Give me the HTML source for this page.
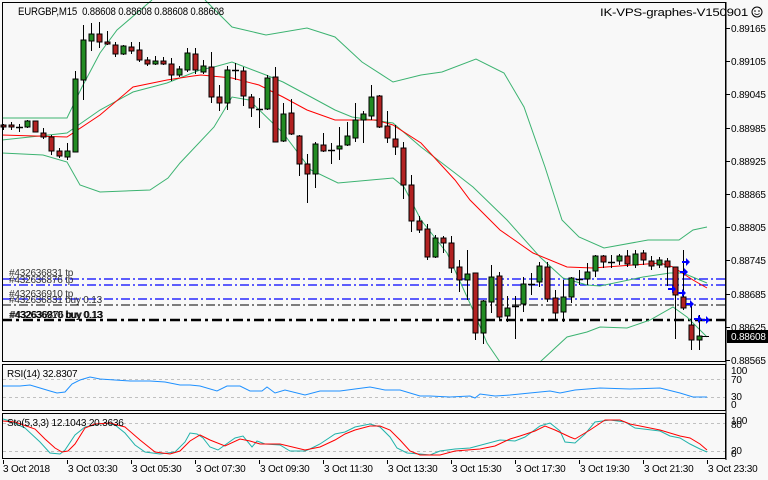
<!DOCTYPE html>
<html><head><meta charset="utf-8"><style>
html,body{margin:0;padding:0;background:#f8f8f8;width:768px;height:480px;overflow:hidden}
svg{display:block;font-family:"Liberation Sans",sans-serif;font-size:10px;letter-spacing:-0.2px}
</style></head><body>
<svg id="s" width="768" height="480" viewBox="0 0 768 480" xmlns="http://www.w3.org/2000/svg">
<rect width="768" height="480" fill="#f8f8f8"/>
<g id="g"></g>
</svg>
<script>
var g=document.getElementById('g'),h='';
function pl(pts,c,w,d){h+='<polyline fill="none" stroke="'+c+'" stroke-width="'+(w||1)+'"'+(d?' stroke-dasharray="'+d+'"':'')+' points="'+pts.map(function(p){return p.join(',')}).join(' ')+'"/>';}
function ln(x1,y1,x2,y2,c,w,d){h+='<line x1="'+x1+'" y1="'+y1+'" x2="'+x2+'" y2="'+y2+'" stroke="'+c+'" stroke-width="'+(w||1)+'"'+(d?' stroke-dasharray="'+d+'"':'')+'/>';}
function tx(x,y,t,c,extra){h+='<text x="'+x+'" y="'+y+'" fill="'+(c||'#000')+'" '+(extra||'')+'>'+t+'</text>';}
ln(2,279,726,279,'#0000ff',1.2,'9,3,2,3');
ln(2,285,726,285,'#0000ff',1.2,'9,3,2,3');
ln(2,299,726,299,'#0000ff',1.2,'9,3,2,3');
ln(2,305,726,305,'#000',1,'9,3,2,3');
ln(2,320,726,320,'#000',2.5,'10,4,3,4');
tx(9,276,'#432636831 tp','#333');tx(9,283,'#432636876 tp','#333');
tx(9,297,'#432636910 tp','#333');tx(9,303,'#432636831 buy 0.13','#333');
tx(9,318,'#432636910 buy 0.13','#000');tx(10,318,'#432636876 buy 0.13','#000');
var G='#3cb371';
pl([[2,118],[67,118],[82,87],[100,53],[117,30],[152,0]],G);
pl([[205,0],[232,27],[266,35],[307,28],[335,37],[362,62],[393,82],[421,75],[442,72],[476,59],[504,73],[524,107],[545,167],[562,220],[579,237],[604,248],[648,240],[679,240],[693,230],[707,227]],G);
pl([[2,140],[67,133],[100,110],[133,92],[167,83],[200,70],[214,67],[232,62],[266,75],[283,82],[311,97],[335,110],[352,117],[373,120],[393,123],[421,147],[455,173],[473,187],[507,220],[540,257],[563,278],[587,285],[600,286],[643,277],[670,273],[683,273],[707,283]],G);
pl([[2,153],[43,155],[67,162],[80,185],[100,192],[150,190],[168,178],[180,163],[214,127],[232,97],[249,100],[283,133],[311,170],[338,183],[393,178],[404,187],[421,220],[447,253],[473,310],[487,343],[500,362]],G);
pl([[540,362],[567,337],[587,332],[600,327],[627,328],[650,320],[673,307],[687,317],[707,337]],G);
pl([[2,135],[67,137],[100,115],[133,87],[167,80],[193,76],[201,75],[232,78],[259,85],[283,97],[307,110],[335,120],[376,120],[393,125],[421,143],[455,180],[470,200],[500,230],[533,253],[567,267],[593,268],[660,263],[673,267],[693,280],[707,288]],'#ff0000');
var C=[[3,125,127,124,130,'r'],[11,125,127,122,130,'r'],[19,127,127,124,132,'d'],[27,121,127,120,128,'g'],[35,121,132,121,132,'r'],[43,133,137,128,139,'r'],[51,137,151,135,155,'r'],[59,151,156,148,158,'r'],[67,151,157,143,160,'g'],[75,79,152,71,152,'g'],[83,40,80,25,100,'g'],[91,34,41,23,51,'g'],[99,34,42,22,48,'r'],[107,42,44,31,45,'r'],[115,45,54,42,57,'r'],[123,46,54,45,55,'g'],[131,47,51,42,54,'r'],[139,50,60,42,62,'r'],[147,60,64,57,66,'r'],[155,61,64,56,65,'g'],[163,61,64,57,65,'r'],[171,64,75,58,81,'r'],[179,69,75,66,77,'g'],[187,53,70,48,72,'g'],[195,54,70,48,74,'r'],[203,66,72,60,74,'g'],[211,67,97,52,103,'r'],[219,97,103,85,111,'r'],[227,70,103,66,110,'g'],[235,70,70,63,80,'d'],[243,71,96,67,106,'r'],[251,97,108,94,117,'r'],[259,109,109,98,128,'d'],[267,78,109,75,110,'g'],[275,77,142,67,142,'r'],[283,114,141,103,142,'g'],[291,113,134,99,135,'r'],[299,136,164,135,176,'r'],[307,164,174,154,203,'r'],[315,144,174,142,188,'g'],[323,145,151,133,152,'r'],[331,150,150,143,164,'d'],[339,146,149,127,160,'g'],[347,136,145,122,146,'g'],[355,120,138,103,142,'g'],[363,114,120,111,143,'g'],[371,97,116,85,120,'g'],[379,96,127,95,128,'r'],[387,126,138,111,143,'r'],[395,139,147,125,155,'r'],[403,148,185,142,199,'r'],[411,185,221,175,232,'r'],[419,221,230,216,233,'r'],[427,229,257,224,260,'r'],[435,238,257,235,258,'g'],[443,238,243,236,253,'r'],[451,243,268,236,273,'r'],[459,267,280,260,292,'r'],[467,274,280,250,300,'g'],[475,273,333,273,340,'r'],[483,301,333,300,344,'g'],[491,277,302,265,313,'g'],[499,276,317,272,320,'r'],[507,308,316,296,322,'g'],[515,306,306,296,339,'d'],[523,284,304,277,312,'g'],[531,284,284,273,295,'d'],[539,266,282,262,287,'g'],[547,267,299,262,302,'r'],[555,298,313,290,321,'r'],[563,297,312,280,322,'g'],[571,278,297,277,303,'g'],[579,279,279,270,285,'d'],[587,272,279,263,285,'g'],[595,256,271,255,277,'g'],[603,256,262,255,268,'r'],[611,262,262,255,268,'d'],[619,256,261,254,265,'g'],[627,256,264,250,267,'r'],[635,254,265,250,268,'g'],[643,253,260,250,265,'r'],[651,261,266,256,270,'r'],[659,260,265,257,268,'g'],[667,261,267,258,286,'r'],[675,267,295,267,339,'r'],[683,297,308,250,310,'r'],[691,325,340,304,350,'r'],[699,336,340,315,350,'g']];
C.forEach(function(c){var x=c[0]+0.5;ln(x,c[3],x,c[4],'#000',1);
 if(c[5]=='d'){ln(c[0]-3,c[1]+0.5,c[0]+4,c[1]+0.5,'#000',1.5);}
 else{h+='<rect x="'+(c[0]-2)+'" y="'+c[1]+'" width="5" height="'+Math.max(2,c[2]-c[1])+'" fill="'+(c[5]=='g'?'#228b22':'#b22222')+'" stroke="#000" stroke-width="1"/>';}});
ln(702,336.5,709,336.5,'#000',1);
[[672,289],[682,293],[690,304],[686,262],[684,272],[698,319],[706,320]].forEach(function(p){h+='<path d="M'+(p[0]-4)+' '+(p[1]-1)+'h4v-3l4 4-4 4v-3h-4z" fill="#0000ff"/>';});
h+='<rect x="2.5" y="2.5" width="723" height="359" fill="none" stroke="#000"/>';
h+='<rect x="2.5" y="364.5" width="723" height="46" fill="none" stroke="#000"/>';
h+='<rect x="2.5" y="413.5" width="723" height="45" fill="none" stroke="#000"/>';
ln(726,2,726,460,'#000',1);
var P=['0.89165','0.89105','0.89045','0.88985','0.88925','0.88865','0.88805','0.88745','0.88685','0.88625','0.88565'];
P.forEach(function(t,i){var y=28+i*33.2;ln(726,Math.round(y)+0.5,730,Math.round(y)+0.5,'#000');tx(731,Math.round(y)+4,t);});
h+='<rect x="727" y="330" width="41" height="13" fill="#000"/>';tx(731,340,'0.88608','#fff');
tx(18,15,'EURGBP,M15&#160;&#160;0.88608 0.88608 0.88608 0.88608','#000','font-size="11" textLength="206" lengthAdjust="spacingAndGlyphs"');
tx(600,16,'IK-VPS-graphes-V150901','#000','font-size="11" textLength="148" lengthAdjust="spacingAndGlyphs"');
h+='<circle cx="757" cy="12" r="5" fill="none" stroke="#000"/><circle cx="755" cy="11" r="0.8"/><circle cx="759" cy="11" r="0.8"/><path d="M754.5 13.5q2.5 2 5 0" fill="none" stroke="#000" stroke-width="0.8"/>';
ln(3,379.5,725,379.5,'#c0c0c0',1,'3,3');ln(3,397.5,725,397.5,'#c0c0c0',1,'3,3');
pl([[3,386],[20,386],[30,385],[40,388],[50,391],[57,393],[65,392],[72,384],[80,380],[90,377],[100,379],[115,380],[130,381],[150,381],[165,382],[180,385],[190,385],[200,386],[217,391],[227,386],[240,386],[250,391],[262,391],[267,387],[275,393],[285,390],[305,395],[320,391],[340,391],[355,389],[370,387],[385,390],[400,390],[410,393],[420,396],[430,396],[450,397],[470,396],[475,398],[480,394],[495,396],[510,395],[530,393],[550,391],[560,393],[575,390],[600,388],[630,389],[660,388],[680,393],[693,397],[707,397]],'#1e90ff');
tx(7,377,'RSI(14) 32.8307');
tx(731,374,'100');tx(731,383,'70');tx(731,400,'30');tx(731,408,'0');
ln(3,423.5,725,423.5,'#c0c0c0',1,'3,3');ln(3,451.5,725,451.5,'#c0c0c0',1,'3,3');
pl([[3,419],[10,421],[25,428],[40,442],[50,453],[60,454],[65,450],[75,435],[85,427],[105,423],[115,425],[125,433],[135,445],[145,452],[160,454],[175,452],[185,442],[190,433],[197,434],[203,438],[210,447],[218,450],[225,445],[235,438],[243,436],[252,447],[257,441],[265,444],[280,445],[290,451],[305,451],[310,449],[320,444],[335,434],[345,432],[355,427],[370,424],[380,427],[390,437],[397,448],[407,453],[420,454],[430,455],[440,451],[455,449],[470,448],[485,444],[500,440],[515,441],[525,437],[540,426],[550,423],[560,431],[565,442],[575,443],[585,434],[595,422],[610,420],[625,422],[635,428],[660,431],[670,436],[680,438],[690,444],[700,449],[707,452]],'#20b2aa');
pl([[3,421],[15,422],[35,429],[45,439],[55,448],[62,452],[68,451],[75,444],[85,428],[95,424],[110,423],[125,427],[140,440],[155,452],[170,454],[180,451],[190,441],[200,435],[210,440],[225,446],[240,439],[250,441],[260,444],[280,444],[305,450],[320,447],[335,440],[345,434],[355,430],[370,426],[380,426],[390,430],[400,440],[410,451],[420,455],[440,455],[455,451],[480,449],[495,446],[510,439],[520,436],[535,431],[545,426],[555,430],[570,437],[575,439],[590,430],[605,420],[620,420],[630,424],[660,430],[680,436],[690,438],[700,444],[707,450]],'#ff0000');
tx(7,426,'Sto(5,3,3) 12.1043 20.3636');
tx(731,424,'100');tx(731,428,'80');tx(731,454,'20');tx(731,457,'0');
var T=['3 Oct 2018','3 Oct 03:30','3 Oct 05:30','3 Oct 07:30','3 Oct 09:30','3 Oct 11:30','3 Oct 13:30','3 Oct 15:30','3 Oct 17:30','3 Oct 19:30','3 Oct 21:30','3 Oct 23:30'];
T.forEach(function(t,i){var x=i==0?3:3+i*64;ln(x+0.5,460,x+0.5,464,'#000');tx(x+(i==0?0:1),472,t);});
g.innerHTML=h;
</script>
</body></html>
